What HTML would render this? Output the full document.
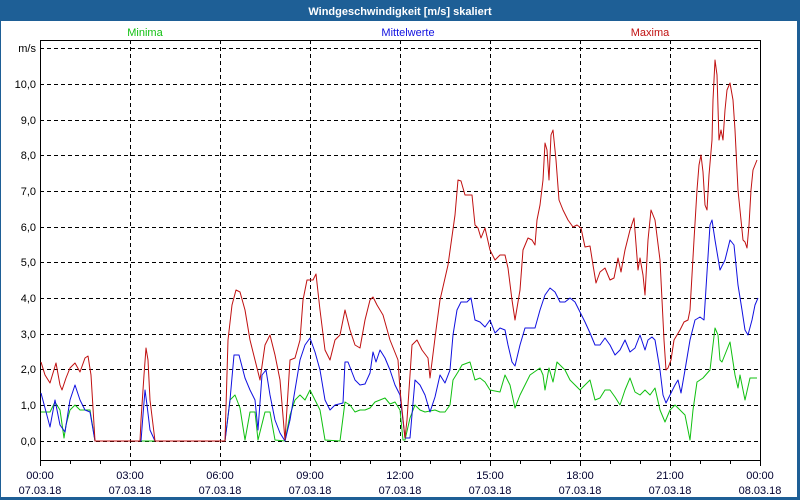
<!DOCTYPE html>
<html><head><meta charset="utf-8"><style>
html,body{margin:0;padding:0;background:#1e5f96;}
body{width:800px;height:500px;overflow:hidden;position:relative;font-family:"Liberation Sans",sans-serif;}
</style></head><body>
<svg width="800" height="500" xmlns="http://www.w3.org/2000/svg" style="position:absolute;left:0;top:0" font-family="Liberation Sans, sans-serif" font-size="11">
<rect x="0" y="0" width="800" height="500" fill="#1e5f96"/>
<rect x="1" y="21" width="796" height="476" fill="#fff"/>
<text x="400" y="15" fill="#fff" font-weight="bold" text-anchor="middle">Windgeschwindigkeit [m/s] skaliert</text>
<text x="145" y="36" fill="#10c010" text-anchor="middle">Minima</text>
<text x="408" y="36" fill="#1010e0" text-anchor="middle">Mittelwerte</text>
<text x="650" y="36" fill="#c01010" text-anchor="middle">Maxima</text>
<g stroke="#000" stroke-width="1" stroke-dasharray="4,3" fill="none">
<path d="M40 48.5H760M40 84.5H760M40 120.5H760M40 155.5H760M40 191.5H760M40 227.5H760M40 262.5H760M40 298.5H760M40 334.5H760M40 369.5H760M40 405.5H760M40 441.5H760"/>
<path d="M130.5 40V460M220.5 40V460M310.5 40V460M400.5 40V460M490.5 40V460M580.5 40V460M670.5 40V460"/>
</g>
<path d="M40.5 40.5H760.5V460.5H40.5Z" stroke="#000" fill="none"/>
<path d="M40.5 460V466M70.5 460V464M100.5 460V464M130.5 460V466M160.5 460V464M190.5 460V464M220.5 460V466M250.5 460V464M280.5 460V464M310.5 460V466M340.5 460V464M370.5 460V464M400.5 460V466M430.5 460V464M460.5 460V464M490.5 460V466M520.5 460V464M550.5 460V464M580.5 460V466M610.5 460V464M640.5 460V464M670.5 460V466M700.5 460V464M730.5 460V464M760.5 460V466" stroke="#000"/>
<g fill="#000" text-anchor="end">
<text x="36" y="52">m/s</text><text x="36" y="88">10,0</text><text x="36" y="124">9,0</text><text x="36" y="159">8,0</text><text x="36" y="195">7,0</text><text x="36" y="231">6,0</text><text x="36" y="266">5,0</text><text x="36" y="302">4,0</text><text x="36" y="338">3,0</text><text x="36" y="373">2,0</text><text x="36" y="409">1,0</text><text x="36" y="445">0,0</text>
</g>
<g fill="#000030" text-anchor="middle">
<text x="40" y="479">00:00</text><text x="40" y="494">07.03.18</text>
<text x="130" y="479">03:00</text><text x="130" y="494">07.03.18</text>
<text x="220" y="479">06:00</text><text x="220" y="494">07.03.18</text>
<text x="310" y="479">09:00</text><text x="310" y="494">07.03.18</text>
<text x="400" y="479">12:00</text><text x="400" y="494">07.03.18</text>
<text x="490" y="479">15:00</text><text x="490" y="494">07.03.18</text>
<text x="580" y="479">18:00</text><text x="580" y="494">07.03.18</text>
<text x="670" y="479">21:00</text><text x="670" y="494">07.03.18</text>
<text x="760" y="479">00:00</text><text x="760" y="494">08.03.18</text>
</g>
<g fill="none" stroke-width="1" stroke-linejoin="round">
<polyline stroke="#10c010" points="41,412 50,412 55,402 60,410 64,438 66,425 70,410 75,405 80,410 90,410 95,441 225,441 230,400 235,395 240,408 245,440 250,412 255,412 258,440 265,412 270,412 275,440 285,441 290,415 295,400 300,395 305,400 310,390 315,400 320,410 325,440 340,441 345,402 350,405 355,412 360,410 365,410 370,408 375,402 380,400 385,398 390,404 395,402 400,410 403,440 405,440 410,418 415,405 420,410 425,412 435,410 440,412 445,412 450,405 453,380 458,372 462,365 470,362 475,380 480,378 485,382 490,390 500,392 505,375 510,385 515,408 520,395 525,385 530,375 540,368 543,375 545,390 549,368 553,382 557,362 560,365 565,370 570,380 575,385 580,390 585,385 590,380 595,400 600,398 605,390 610,390 615,397 620,405 625,390 630,378 635,392 640,395 645,390 650,395 655,388 660,410 665,422 670,410 675,405 680,410 685,415 690,440 693,410 697,382 703,378 710,370 715,328 718,335 720,360 722,362 730,342 735,375 738,388 740,375 745,400 750,378 757,378"/>
<polyline stroke="#1010e0" points="41,393 45,408 50,427 55,400 60,425 65,432 70,400 75,385 80,400 85,410 90,412 95,441 141,441 143,415 145,390 147,405 150,430 155,441 225,441 230,400 234,355 239,355 245,378 250,390 255,400 258,430 262,375 266,370 270,395 275,420 280,433 285,441 290,420 295,390 300,360 305,345 310,338 315,352 320,370 325,400 330,410 335,405 343,403 345,362 348,362 355,380 360,385 365,384 370,373 373,352 376,362 380,350 385,358 390,370 395,385 400,395 405,438 410,438 415,380 420,385 425,395 430,412 435,397 440,375 445,383 450,370 453,335 457,310 461,302 467,302 471,298 475,320 480,322 485,327 490,320 495,333 500,328 505,330 508,345 512,362 515,366 520,345 525,328 535,328 540,310 545,295 550,288 555,292 560,302 565,302 570,298 575,302 580,312 585,322 590,333 595,345 600,345 605,338 610,345 615,355 620,350 625,340 630,352 635,348 640,335 645,350 648,340 652,337 655,340 660,370 663,395 666,403 670,395 675,385 678,380 681,393 685,370 690,340 695,320 700,317 704,320 710,225 712,220 715,240 720,270 725,260 730,240 734,245 738,285 742,310 745,330 748,335 752,320 755,305 758,298"/>
<polyline stroke="#c01010" points="41,362 45,375 50,383 56,363 60,385 62,390 66,378 70,368 75,363 80,372 85,358 88,356 91,375 95,441 140,441 141,420 144,375 146,348 148,360 150,400 155,441 225,441 228,340 232,305 236,290 240,292 245,310 250,340 255,360 260,380 265,345 270,335 275,355 280,380 285,440 290,360 295,358 300,340 303,300 307,280 313,280 316,274 320,310 325,350 330,360 335,340 340,335 345,310 350,330 355,345 360,348 365,320 370,300 373,297 377,305 383,315 390,340 398,360 400,390 405,438 407,420 410,375 412,345 417,340 422,350 428,358 430,378 436,330 440,300 448,265 455,215 458,180 461,181 465,195 472,195 475,225 478,228 481,238 485,228 490,250 495,260 500,255 505,255 508,268 512,300 515,320 520,290 523,250 528,238 532,240 535,245 537,220 540,205 543,180 545,143 547,150 549,180 551,135 553,130 556,160 559,200 563,210 568,220 573,227 577,225 581,228 585,247 590,246 593,265 596,283 600,272 605,268 610,280 614,278 618,258 621,272 625,250 630,230 634,218 638,270 640,258 643,275 645,295 648,240 651,210 655,220 660,260 662,300 664,340 666,370 668,368 671,360 674,340 677,335 680,330 684,322 688,320 690,310 694,240 697,190 699,165 701,155 703,172 705,205 707,210 709,175 712,140 713,100 715,60 717,75 719,140 721,130 723,140 725,110 727,90 730,83 733,100 735,130 738,190 741,220 743,240 745,242 747,248 749,225 751,190 753,170 755,165 757,160"/>
</g>
</svg>
</body></html>
